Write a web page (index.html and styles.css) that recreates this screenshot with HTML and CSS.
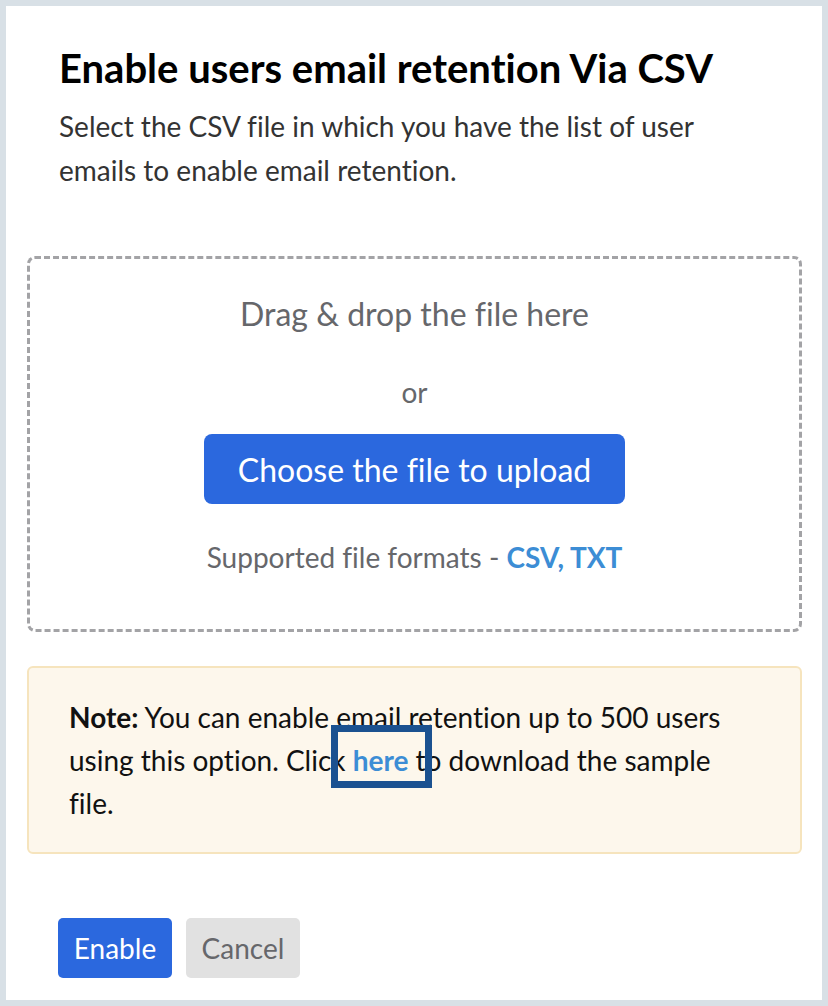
FILE: index.html
```html
<!DOCTYPE html>
<html lang="en">
<head>
    <meta charset="UTF-8">
    <meta name="viewport" content="width=device-width, initial-scale=1.0">
    <title>Email Retention</title>
    <link rel="stylesheet" href="styles.css">
</head>
<body>
    <div class="frame">
        <main class="dialog">
            <h1>Enable users email retention Via CSV</h1>
            <p class="intro">Select the CSV file in which you have the list of user emails to enable email retention.</p>

            <section class="dropzone">
                <p class="drop_title">Drag &amp; drop the file here</p>
                <p class="drop_or">or</p>
                <button class="btn_upload" type="button">Choose the file to upload</button>
                <p class="formats">Supported file formats - <b>CSV, TXT</b></p>
            </section>

            <section class="note">
                <p><b>Note:</b> You can enable email retention up to 500 users using this option. Click <a href="#" class="sample_link">here</a> to download the sample file.</p>
            </section>

            <div class="actions">
                <button class="btn btn_primary" type="button">Enable</button>
                <button class="btn btn_cancel" type="button">Cancel</button>
            </div>
        </main>
    </div>
</body>
</html>
```

FILE: styles.css
```css
html, body {
    margin: 0;
    padding: 0;
}
body {
    font-family: Lato, 'Open Sans', sans-serif;
    font-variant-ligatures: no-common-ligatures;
    background-color: #d8e0e6;
    color: #111;
}
.frame {
    padding: 6px;
    height: 1006px;
    box-sizing: border-box;
}
.dialog {
    background: #fff;
    height: 100%;
    box-sizing: border-box;
    padding: 38px 20px 0 21px;
}
h1 {
    margin: 0 0 0 32px;
    font-size: 40px;
    font-weight: 700;
    line-height: 48px;
    color: #000;
}
.intro {
    margin: 12px 0 0 32px;
    width: 680px;
    font-size: 28px;
    line-height: 44px;
    color: #333;
}
.dropzone {
    margin-top: 64px;
    height: 376px;
    box-sizing: border-box;
    border: 3px dashed #a3a3a6;
    border-radius: 8px;
    padding-top: 35px;
    display: flex;
    flex-direction: column;
    align-items: center;
}
.dropzone p {
    margin: 0;
    color: #66676b;
}
.drop_title {
    font-size: 32px;
    line-height: 40px;
}
.drop_or {
    margin-top: 42px !important;
    font-size: 28px;
    line-height: 32px;
}
.btn_upload {
    margin-top: 26px;
    width: 421px;
    height: 70px;
    border: none;
    border-radius: 8px;
    background-color: #2b68de;
    color: #fff;
    font-family: inherit;
    font-variant-ligatures: inherit;
    font-size: 32px;
}
.formats {
    margin-top: 37px !important;
    font-size: 28px;
    line-height: 32px;
}
.formats b {
    color: #3c8dd5;
}
.note {
    margin-top: 34px;
    background-color: #fdf7ec;
    border: 2px solid #f6e4bd;
    border-radius: 6px;
    padding: 28px 60px 27px 40px;
}
.note p {
    margin: 0;
    font-size: 28px;
    line-height: 43px;
    color: #111;
}
.sample_link {
    color: #3c8dd5;
    font-weight: 700;
    text-decoration: none;
    position: relative;
}
.sample_link::after {
    content: '';
    position: absolute;
    left: -22px;
    right: -24px;
    top: -18px;
    bottom: -11px;
    border: 7px solid #1b5190;
}
.actions {
    margin-top: 64px;
    margin-left: 31px;
    display: flex;
    gap: 14px;
}
.btn {
    width: 114px;
    height: 60px;
    border: none;
    border-radius: 5px;
    font-family: inherit;
    font-size: 28px;
}
.btn_primary {
    background-color: #2b68de;
    color: #fff;
}
.btn_cancel {
    background-color: #e1e1e1;
    color: #66676b;
}
```
